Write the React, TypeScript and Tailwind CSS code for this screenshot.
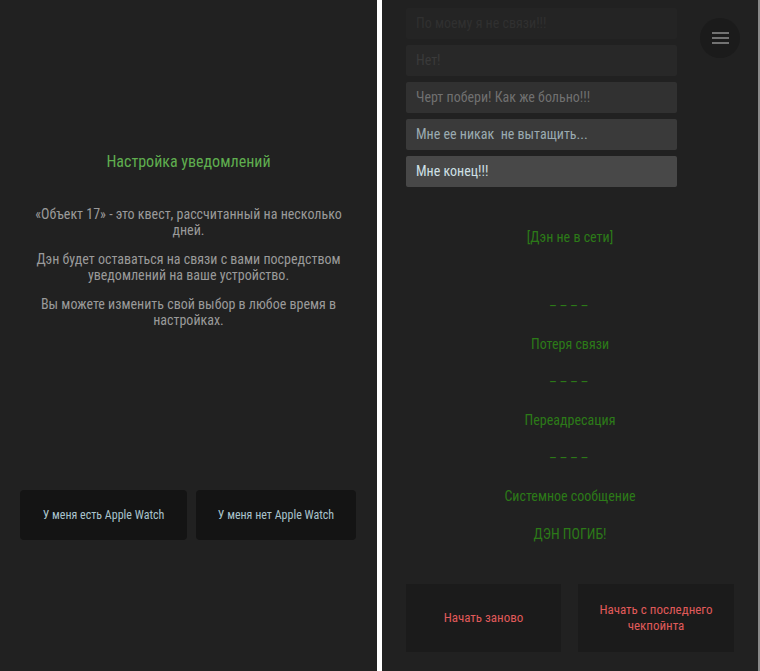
const font = { fontFamily: '"Liberation Sans Narrow", "Roboto Condensed", Roboto, sans-serif' }

type Bubble = { text: string; bg: string; fg: string }

const bubbles: Bubble[] = [
  { text: "По моему я не связи!!!", bg: "bg-[#242424]", fg: "text-[#303030]" },
  { text: "Нет!", bg: "bg-[#282828]", fg: "text-[#3a3a3a]" },
  { text: "Черт побери! Как же больно!!!", bg: "bg-[#313131]", fg: "text-[#707070]" },
  { text: "Мне ее никак  не вытащить...", bg: "bg-[#3a3a3a]", fg: "text-[#9aabb1]" },
  { text: "Мне конец!!!", bg: "bg-[#484848]", fg: "text-[#cfe0e6]" },
]

const feed = ["––––", "Потеря связи", "––––", "Переадресация", "––––", "Системное сообщение", "ДЭН ПОГИБ!"]

function SetupScreen() {
  return (
    <div className="w-[377px] h-full bg-[#212121] flex flex-col items-center">
      <h1 className="mt-[152px] text-[16px] leading-[20px] text-[#5fae4f]">Настройка уведомлений</h1>
      <div className="mt-[34px] w-[320px] flex flex-col gap-[13px] text-center text-[14px] leading-[16px] text-[#9a9a9a]">
        <p>«Объект 17» - это квест, рассчитанный на несколько дней.</p>
        <p>Дэн будет оставаться на связи с вами посредством уведомлений на ваше устройство.</p>
        <p>Вы можете изменить свой выбор в любое время в настройках.</p>
      </div>
      <div className="mt-auto mb-[131px] self-stretch flex gap-[9px] pl-[20px]">
        <button className="w-[167px] h-[50px] rounded-[4px] bg-[#141414] text-[12px] text-[#a9c3cc]">
          У меня есть Apple Watch
        </button>
        <button className="w-[160px] h-[50px] rounded-[4px] bg-[#141414] text-[12px] text-[#a9c3cc]">
          У меня нет Apple Watch
        </button>
      </div>
    </div>
  )
}

function ChatScreen() {
  return (
    <div className="relative w-[376px] h-full bg-[#212121] flex flex-col">
      <div className="pt-[8px] pl-[24px] flex flex-col gap-[6px]">
        {bubbles.map((b) => (
          <div
            key={b.text}
            className={`w-[271px] h-[31px] rounded-[2px] px-[10px] flex items-center text-[14px] whitespace-pre ${b.bg} ${b.fg}`}
          >
            {b.text}
          </div>
        ))}
      </div>

      <div className="mt-[40px] text-center text-[14px] leading-[20px] text-[#2c7a18]">[Дэн не в сети]</div>
      <div className="mt-[49px] flex flex-col gap-[18px] text-center text-[14px] leading-[20px] text-[#2c7a18]">
        {feed.map((line, i) => (
          <div key={i} className={line === "––––" ? "tracking-[2.5px]" : ""}>
            {line}
          </div>
        ))}
      </div>

      <div className="mt-[40px] pl-[24px] flex gap-[17px]">
        <button className="w-[155px] h-[68px] bg-[#1b1b1b] text-[13px] leading-[16px] text-[#e05a5a]">
          Начать заново
        </button>
        <button className="w-[156px] h-[68px] bg-[#1b1b1b] text-[13px] leading-[16px] text-[#e05a5a] px-4">
          Начать с последнего чекпойнта
        </button>
      </div>

      <button className="absolute left-[318px] top-[18px] w-[40px] h-[40px] rounded-full bg-[#1b1b1b] flex flex-col items-center justify-center gap-[3px]">
        <span className="block w-[17px] h-[2px] bg-[#727272]" />
        <span className="block w-[17px] h-[2px] bg-[#727272]" />
        <span className="block w-[17px] h-[2px] bg-[#727272]" />
      </button>
    </div>
  )
}

export default function App() {
  return (
    <div className="w-[760px] h-[671px] flex bg-white overflow-hidden" style={font}>
      <SetupScreen />
      <div className="w-[5px]" />
      <ChatScreen />
      <div className="w-[2px] bg-[#8a8a8a]" />
    </div>
  )
}
